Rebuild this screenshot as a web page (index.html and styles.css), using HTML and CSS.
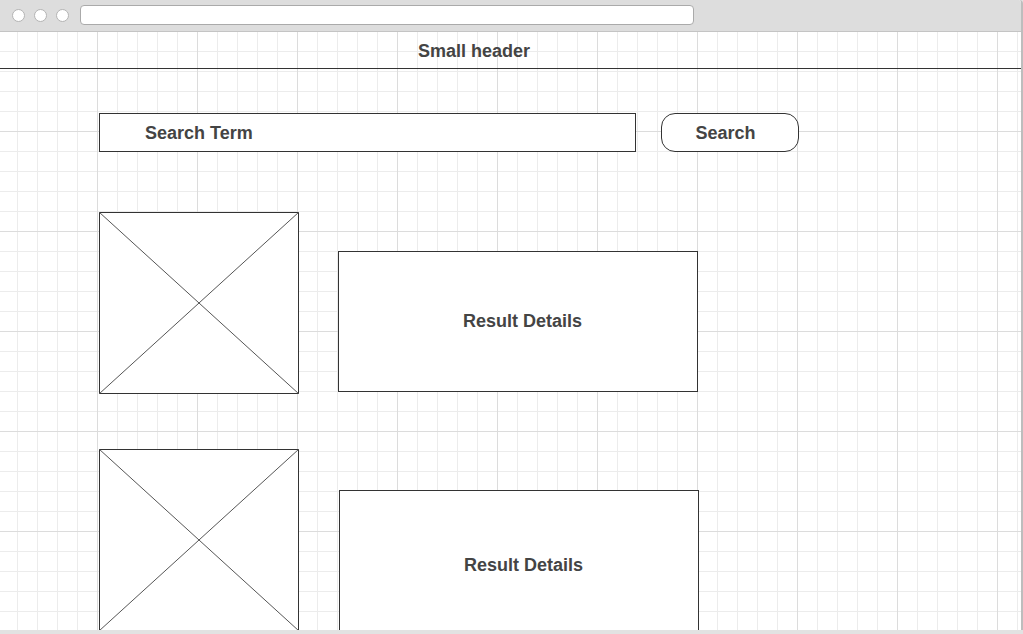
FILE: index.html
```html
<!DOCTYPE html>
<html lang="en">
  <head>
    <meta charset="UTF-8" />
    <title>Search Results Wireframe</title>
    <link rel="stylesheet" href="styles.css">
  </head>
  <body>
    <div class="window">
      <!-- browser chrome -->
      <div class="chrome">
        <span class="dot"></span>
        <span class="dot"></span>
        <span class="dot"></span>
        <div class="address"></div>
      </div>

      <div class="canvas">
        <div class="header">Small header</div>

        <div class="search-row">
          <div class="search-input">Search Term</div>
          <div class="search-button">Search</div>
        </div>

        <div class="result">
          <svg class="thumb" viewBox="0 0 200 182" preserveAspectRatio="none">
            <rect x="0.5" y="0.5" width="199" height="181" fill="#fff" stroke="#333" />
            <line x1="0" y1="0" x2="200" y2="182" stroke="#555" stroke-width="1" />
            <line x1="200" y1="0" x2="0" y2="182" stroke="#555" stroke-width="1" />
          </svg>
          <div class="details">Result Details</div>
        </div>

        <div class="result second">
          <svg class="thumb" viewBox="0 0 200 182" preserveAspectRatio="none">
            <rect x="0.5" y="0.5" width="199" height="181" fill="#fff" stroke="#333" />
            <line x1="0" y1="0" x2="200" y2="182" stroke="#555" stroke-width="1" />
            <line x1="200" y1="0" x2="0" y2="182" stroke="#555" stroke-width="1" />
          </svg>
          <div class="details">Result Details</div>
        </div>
      </div>
    </div>
  </body>
</html>
```

FILE: styles.css
```css
body {
  margin: 0;
  font-family: "Liberation Sans", Arial, sans-serif;
  background-color: #e2e2e2;
  overflow: hidden;
}
.window {
  width: 1021px;
  height: 630px;
  display: flex;
  flex-direction: column;
  border-right: 2px solid #bdbdbd;
  border-top-right-radius: 4px;
  overflow: hidden;
  background-color: #fff;
}
.chrome {
  height: 32px;
  flex-shrink: 0;
  box-sizing: border-box;
  background-color: #dddddd;
  border-bottom: 1px solid #c4c4c4;
  display: flex;
  align-items: center;
  padding-left: 12px;
}
.dot {
  width: 13px;
  height: 13px;
  box-sizing: border-box;
  border-radius: 50%;
  background-color: #fff;
  border: 1px solid #b4b4b4;
  margin-right: 9px;
  margin-top: -1px;
}
.address {
  margin-left: 2px;
  width: 614px;
  height: 20px;
  box-sizing: border-box;
  background-color: #fff;
  border: 1px solid #aaaaaa;
  border-radius: 4px;
  margin-top: -2px;
}
.canvas {
  flex: 1;
  overflow: hidden;
  background-color: #fff;
  background-image:
    linear-gradient(#dcdcdc 1px, transparent 1px),
    linear-gradient(90deg, #dcdcdc 1px, transparent 1px),
    linear-gradient(#ececec 1px, transparent 1px),
    linear-gradient(90deg, #ececec 1px, transparent 1px);
  background-size: 100px 100px, 100px 100px, 20px 20px, 20px 20px;
  background-position: 0 99px, 97px 0, 0 19px, 17px 0;
}
.header {
  height: 36px;
  line-height: 38px;
  border-bottom: 1px solid #333;
  padding-left: 418px;
  font-size: 18px;
  font-weight: bold;
  color: #444;
}
.search-row {
  display: flex;
  margin: 44px 0 0 99px;
}
.search-input {
  width: 537px;
  height: 39px;
  box-sizing: border-box;
  border: 1px solid #333;
  background-color: #fff;
  padding-left: 45px;
  line-height: 39px;
  font-size: 18px;
  font-weight: bold;
  color: #444;
}
.search-button {
  width: 138px;
  height: 39px;
  box-sizing: border-box;
  margin-left: 25px;
  border: 1px solid #333;
  border-radius: 14px;
  background-color: #fff;
  text-align: center;
  padding-right: 9px;
  line-height: 39px;
  font-size: 18px;
  font-weight: bold;
  color: #444;
}
.result {
  display: flex;
  align-items: flex-start;
  margin: 60px 0 0 99px;
}
.result.second {
  margin-top: 55px;
}
.thumb {
  display: block;
  width: 200px;
  height: 182px;
  flex-shrink: 0;
}
.details {
  width: 360px;
  height: 141px;
  box-sizing: border-box;
  margin: 39px 0 0 39px;
  border: 1px solid #333;
  background-color: #fff;
  display: flex;
  align-items: center;
  justify-content: center;
  padding-left: 9px;
  font-size: 18px;
  font-weight: bold;
  color: #444;
}
.second .details {
  margin: 41px 0 0 40px;
  height: 150px;
}
```
